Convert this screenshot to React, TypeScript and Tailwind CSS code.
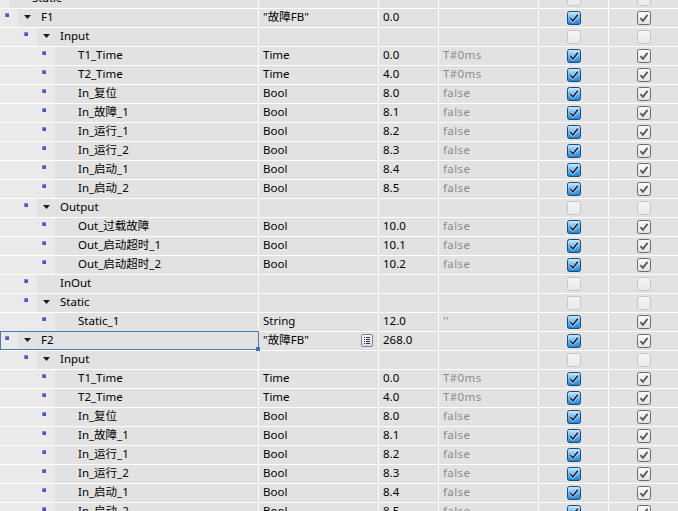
import React from "react";

type Row = {
  lvl: number;
  name: string;
  exp?: boolean;
  type?: string;
  off?: string;
  def?: string;
  cb: "on" | "dis";
  selected?: boolean;
  icon?: boolean;
};

const leaves = (): Row[] => [
  { lvl: 2, name: "T1_Time", type: "Time", off: "0.0", def: "T#0ms", cb: "on" },
  { lvl: 2, name: "T2_Time", type: "Time", off: "4.0", def: "T#0ms", cb: "on" },
  { lvl: 2, name: "In_复位", type: "Bool", off: "8.0", def: "false", cb: "on" },
  { lvl: 2, name: "In_故障_1", type: "Bool", off: "8.1", def: "false", cb: "on" },
  { lvl: 2, name: "In_运行_1", type: "Bool", off: "8.2", def: "false", cb: "on" },
  { lvl: 2, name: "In_运行_2", type: "Bool", off: "8.3", def: "false", cb: "on" },
  { lvl: 2, name: "In_启动_1", type: "Bool", off: "8.4", def: "false", cb: "on" },
  { lvl: 2, name: "In_启动_2", type: "Bool", off: "8.5", def: "false", cb: "on" },
];

const rows: Row[] = [
  { lvl: -1, name: "Static", exp: true, cb: "dis" },
  { lvl: 0, name: "F1", exp: true, type: '"故障FB"', off: "0.0", cb: "on" },
  { lvl: 1, name: "Input", exp: true, cb: "dis" },
  ...leaves(),
  { lvl: 1, name: "Output", exp: true, cb: "dis" },
  { lvl: 2, name: "Out_过载故障", type: "Bool", off: "10.0", def: "false", cb: "on" },
  { lvl: 2, name: "Out_启动超时_1", type: "Bool", off: "10.1", def: "false", cb: "on" },
  { lvl: 2, name: "Out_启动超时_2", type: "Bool", off: "10.2", def: "false", cb: "on" },
  { lvl: 1, name: "InOut", cb: "dis" },
  { lvl: 1, name: "Static", exp: true, cb: "dis" },
  { lvl: 2, name: "Static_1", type: "String", off: "12.0", def: "''", cb: "on" },
  { lvl: 0, name: "F2", exp: true, type: '"故障FB"', off: "268.0", cb: "on", selected: true, icon: true },
  { lvl: 1, name: "Input", exp: true, cb: "dis" },
  ...leaves(),
];

const indentW: Record<number, string> = {
  [-1]: "w-0",
  0: "w-[18px]",
  1: "w-[37px]",
  2: "w-[55px]",
};

function BlueCheck() {
  return (
    <svg width="14" height="14" viewBox="0 0 14 14">
      <defs>
        <linearGradient id="bcg" x1="0" y1="0" x2="0" y2="1">
          <stop offset="0" stopColor="#d8f0ff" />
          <stop offset="0.45" stopColor="#6cbcf2" />
          <stop offset="1" stopColor="#1580d8" />
        </linearGradient>
      </defs>
      <rect x="0.5" y="0.5" width="13" height="13" rx="2" fill="url(#bcg)" stroke="#1f4a78" />
      <path d="M3.2 7.2 L5.9 9.9 L10.9 3.6" stroke="#ffffff" strokeWidth="3" fill="none" strokeLinejoin="round" />
      <path d="M3.2 7.2 L5.9 9.9 L10.9 3.6" stroke="#142f58" strokeWidth="1.8" fill="none" />
    </svg>
  );
}

function GrayCheck() {
  return (
    <svg width="14" height="14" viewBox="0 0 14 14">
      <defs>
        <linearGradient id="gcg" x1="0" y1="0" x2="0" y2="1">
          <stop offset="0" stopColor="#fcfcfc" />
          <stop offset="1" stopColor="#e2e2e2" />
        </linearGradient>
      </defs>
      <rect x="0.5" y="0.5" width="13" height="13" rx="2" fill="url(#gcg)" stroke="#6a6a6a" />
      <path d="M3.4 7.2 L5.9 9.8 L10.6 3.9" stroke="#575757" strokeWidth="1.8" fill="none" />
    </svg>
  );
}

function EmptyCheck() {
  return (
    <svg width="14" height="14" viewBox="0 0 14 14">
      <defs>
        <linearGradient id="ecg" x1="0" y1="0" x2="0" y2="1">
          <stop offset="0" stopColor="#f6f6f6" />
          <stop offset="1" stopColor="#e9e9e9" />
        </linearGradient>
      </defs>
      <rect x="0.5" y="0.5" width="13" height="13" rx="2" fill="url(#ecg)" stroke="#c6c6c6" />
    </svg>
  );
}

function Triangle() {
  return (
    <svg width="7" height="4" viewBox="0 0 7 4" className="block">
      <path d="M0 0 H7 L3.5 4 Z" fill="#1a1a1a" />
    </svg>
  );
}

function ListIcon() {
  return (
    <svg width="12" height="13" viewBox="0 0 12 13" className="block">
      <defs>
        <linearGradient id="lig" x1="0" y1="0" x2="0" y2="1">
          <stop offset="0" stopColor="#fbfbfd" />
          <stop offset="1" stopColor="#dcdde6" />
        </linearGradient>
      </defs>
      <rect x="0.5" y="0.5" width="11" height="12" rx="1.5" fill="url(#lig)" stroke="#7d8090" />
      <rect x="3" y="3" width="1" height="1" fill="#2a2f55" />
      <rect x="5" y="3" width="4" height="1" fill="#2a2f55" />
      <rect x="3" y="5" width="1" height="1" fill="#2a2f55" />
      <rect x="5" y="5" width="4" height="1" fill="#2a2f55" />
      <rect x="3" y="7" width="1" height="1" fill="#2a2f55" />
      <rect x="5" y="7" width="4" height="1" fill="#2a2f55" />
      <rect x="3" y="9" width="1" height="1" fill="#2a2f55" />
      <rect x="5" y="9" width="4" height="1" fill="#2a2f55" />
    </svg>
  );
}

function TableRow({ r }: { r: Row }) {
  return (
    <div className="flex h-[19px] border-b border-white">
      <div className="relative flex h-full w-[259px] shrink-0 border-r border-white bg-[#e2e2e2]">
        <div className={`${indentW[r.lvl]} flex h-full shrink-0 items-start justify-end bg-[#eaeaea] pr-[9px] pt-[4px]`}>
          {r.lvl >= 0 && <div className="h-[4px] w-[4px] bg-[#4455c6] shadow-[inset_1px_1px_0_#7d8be0]" />}
        </div>
        <div className="flex h-full w-[23px] shrink-0 items-center pb-[2px] pl-[6px]">{r.exp && <Triangle />}</div>
        <div className="flex h-full items-center whitespace-nowrap pb-[2px] text-black">{r.name}</div>
        {r.selected && (
          <div className="pointer-events-none absolute -top-px left-0 -right-px bottom-0 border border-[#4f79b3]">
            <div className="absolute -bottom-[2px] -right-[2px] h-[4px] w-[4px] bg-[#3d6db3]" />
          </div>
        )}
      </div>
      <div className="flex h-full w-[120px] shrink-0 items-center justify-between border-r border-white bg-[#e2e2e2] pb-[2px] pl-[4px] pr-[5px]">
        <span className="whitespace-nowrap">{r.type ?? ""}</span>
        {r.icon && <ListIcon />}
      </div>
      <div className="flex h-full w-[60px] shrink-0 items-center border-r border-white bg-[#e2e2e2] pb-[2px] pl-[4px]">
        {r.off ?? ""}
      </div>
      <div className="flex h-full w-[100px] shrink-0 items-center border-r border-white bg-[#e2e2e2] pb-[2px] pl-[4px] tracking-[0.4px] text-[#8b8b8b]">
        {r.def ?? ""}
      </div>
      <div className="flex h-full w-[70px] shrink-0 items-center justify-center border-r border-white bg-[#e2e2e2] pb-[1px]">
        {r.cb === "on" ? <BlueCheck /> : <EmptyCheck />}
      </div>
      <div className="flex h-full flex-1 items-center justify-center bg-[#e2e2e2] pb-[1px]">
        {r.cb === "on" ? <GrayCheck /> : <EmptyCheck />}
      </div>
    </div>
  );
}

export default function App() {
  return (
    <div
      className="h-[511px] w-[678px] overflow-hidden bg-white text-[11.5px] leading-none text-black"
      style={{ fontFamily: '"Noto Sans", "Noto Sans CJK SC", sans-serif' }}
    >
      <div className="-mt-[10px]">
        {rows.map((r, i) => (
          <TableRow key={i} r={r} />
        ))}
      </div>
    </div>
  );
}
